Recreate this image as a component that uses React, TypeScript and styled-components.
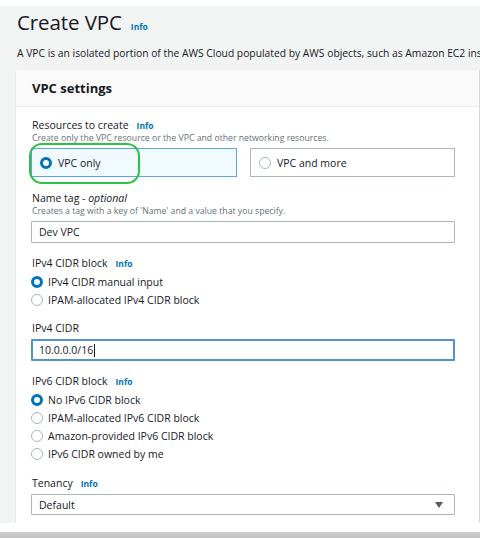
import styled, { createGlobalStyle } from "styled-components";

const GlobalStyle = createGlobalStyle`
  html, body {
    margin: 0;
    padding: 0;
    background: #ffffff;
  }
  body {
    font-family: "Open Sans", "Liberation Sans", sans-serif;
    color: #16191f;
  }
`;

const Page = styled.div`
  width: 480px;
  height: 538px;
  overflow: hidden;
  padding-top: 6px;
  box-sizing: border-box;
  display: flex;
  flex-direction: column;
`;

const Main = styled.main`
  background: #f2f3f3;
  height: 517px;
  overflow: hidden;
  padding: 2px 0 0 16px;
  box-sizing: border-box;
  flex-shrink: 0;
`;

const Gap = styled.div`
  height: 9px;
  background: #ffffff;
  flex-shrink: 0;
`;

const ScrollBar = styled.div`
  height: 6px;
  background: linear-gradient(#cfcfcf, #c4c4c4);
  flex-shrink: 0;
`;

const TitleRow = styled.div`
  display: flex;
  align-items: baseline;
  gap: 9px;
  height: 28px;
  line-height: 28px;
  padding-left: 1px;
`;

const Title = styled.h1`
  margin: 0;
  font-size: 20.5px;
  font-weight: 400;
  color: #16191f;
  letter-spacing: -0.1px;
`;

const Info = styled.a<{ $size?: number }>`
  font-size: ${(p) => p.$size ?? 8.5}px;
  line-height: 1;
  font-weight: 700;
  color: #0073bb;
  text-decoration: none;
  margin-left: ${(p) => (p.$size ? 0 : 8)}px;
`;

const Description = styled.p`
  margin: 10px 0 0 1px;
  font-size: 10.3px;
  line-height: 14px;
  white-space: nowrap;
  color: #16191f;
`;

const Panel = styled.section`
  margin-top: 10px;
  width: 463px;
  background: #ffffff;
  box-shadow: 0 1px 1px rgba(0, 28, 36, 0.25), 1px 0 1px rgba(0, 28, 36, 0.08);
`;

const PanelHeader = styled.div`
  height: 37px;
  box-sizing: border-box;
  display: flex;
  align-items: center;
  padding-left: 16px;
  background: #fafafa;
  border-bottom: 1px solid #eaeded;
`;

const PanelTitle = styled.h2`
  margin: 0;
  font-size: 13px;
  font-weight: 700;
  color: #16191f;
`;

const PanelBody = styled.div`
  padding: 11px 24px 20px 15px;
  display: flex;
  flex-direction: column;
`;

const Field = styled.div<{ $gap?: number }>`
  margin-top: ${(p) => p.$gap ?? 0}px;
  display: flex;
  flex-direction: column;
`;

const Label = styled.div`
  height: 14px;
  font-size: 10.5px;
  line-height: 14px;
  color: #16191f;
  padding-left: 1px;

  em {
    font-style: italic;
  }
`;

const Helper = styled.div`
  font-size: 8.7px;
  line-height: 12px;
  color: #687078;
  padding-left: 1px;
`;

const Tiles = styled.div`
  margin-top: 4px;
  display: grid;
  grid-template-columns: 206px 205px;
  column-gap: 13px;
`;

const Tile = styled.div<{ $checked?: boolean }>`
  position: relative;
  height: 29px;
  box-sizing: border-box;
  display: flex;
  align-items: center;
  gap: 6px;
  padding-left: 8px;
  font-size: 10.5px;
  background: ${(p) => (p.$checked ? "#f1faff" : "#ffffff")};
  border: 1px solid ${(p) => (p.$checked ? "#5aa7dc" : "#aab7b8")};
`;

const Highlight = styled.div`
  position: absolute;
  left: -3px;
  top: -6px;
  width: 111px;
  height: 41px;
  box-sizing: border-box;
  border: 2.5px solid #2cc244;
  border-radius: 13px;
  pointer-events: none;
`;

const Radio = styled.span<{ $checked?: boolean }>`
  width: 12px;
  height: 12px;
  box-sizing: border-box;
  border-radius: 50%;
  flex-shrink: 0;
  background: #ffffff;
  border: ${(p) => (p.$checked ? "3.5px solid #0073bb" : "1px solid #aab7b8")};
`;

const RadioList = styled.div`
  margin-top: 3px;
  display: flex;
  flex-direction: column;
`;

const RadioRow = styled.label`
  height: 18px;
  display: flex;
  align-items: center;
  gap: 5px;
  font-size: 10.5px;
  color: #16191f;
`;

const TextBox = styled.div<{ $focused?: boolean; $h?: number }>`
  margin-top: 4px;
  width: 424px;
  height: ${(p) => p.$h ?? 22}px;
  box-sizing: border-box;
  display: flex;
  align-items: center;
  padding-left: ${(p) => (p.$focused ? 6 : 7)}px;
  padding-right: 10px;
  font-size: 10.5px;
  color: #16191f;
  background: #ffffff;
  border: ${(p) => (p.$focused ? "2px solid #4f94cf" : "1px solid #aab7b8")};
  border-radius: 1px;
`;

const Caret = styled.span`
  display: inline-block;
  width: 1px;
  height: 13px;
  background: #16191f;
  margin-left: 1px;
`;

const SelectText = styled.span`
  flex: 1;
`;

const SelectArrow = styled.span`
  width: 0;
  height: 0;
  border-left: 4.5px solid transparent;
  border-right: 4.5px solid transparent;
  border-top: 6px solid #545b64;
  margin-right: 1px;
`;

const ipv4Options = ["IPv4 CIDR manual input", "IPAM-allocated IPv4 CIDR block"];
const ipv6Options = [
  "No IPv6 CIDR block",
  "IPAM-allocated IPv6 CIDR block",
  "Amazon-provided IPv6 CIDR block",
  "IPv6 CIDR owned by me",
];

export default function App() {
  return (
    <>
      <GlobalStyle />
      <Page>
        <Main>
          <TitleRow>
            <Title>Create VPC</Title>
            <Info $size={8.5}>Info</Info>
          </TitleRow>
          <Description>
            A VPC is an isolated portion of the AWS Cloud populated by AWS objects, such as Amazon EC2 instances.
          </Description>
          <Panel>
            <PanelHeader>
              <PanelTitle>VPC settings</PanelTitle>
            </PanelHeader>
            <PanelBody>
              <Field>
                <Label>
                  Resources to create<Info>Info</Info>
                </Label>
                <Helper>Create only the VPC resource or the VPC and other networking resources.</Helper>
                <Tiles>
                  <Tile $checked>
                    <Radio $checked />
                    VPC only
                    <Highlight />
                  </Tile>
                  <Tile>
                    <Radio />
                    VPC and more
                  </Tile>
                </Tiles>
              </Field>

              <Field $gap={14}>
                <Label>
                  Name tag - <em>optional</em>
                </Label>
                <Helper>Creates a tag with a key of 'Name' and a value that you specify.</Helper>
                <TextBox>Dev VPC</TextBox>
              </Field>

              <Field $gap={13}>
                <Label>
                  IPv4 CIDR block<Info>Info</Info>
                </Label>
                <RadioList>
                  {ipv4Options.map((o, i) => (
                    <RadioRow key={o}>
                      <Radio $checked={i === 0} />
                      {o}
                    </RadioRow>
                  ))}
                </RadioList>
              </Field>

              <Field $gap={12}>
                <Label>IPv4 CIDR</Label>
                <TextBox $focused>
                  10.0.0.0/16
                  <Caret />
                </TextBox>
              </Field>

              <Field $gap={13}>
                <Label>
                  IPv6 CIDR block<Info>Info</Info>
                </Label>
                <RadioList>
                  {ipv6Options.map((o, i) => (
                    <RadioRow key={o}>
                      <Radio $checked={i === 0} />
                      {o}
                    </RadioRow>
                  ))}
                </RadioList>
              </Field>

              <Field $gap={13}>
                <Label>
                  Tenancy<Info>Info</Info>
                </Label>
                <TextBox $h={21}>
                  <SelectText>Default</SelectText>
                  <SelectArrow />
                </TextBox>
              </Field>
            </PanelBody>
          </Panel>
        </Main>
        <Gap />
        <ScrollBar />
      </Page>
    </>
  );
}
